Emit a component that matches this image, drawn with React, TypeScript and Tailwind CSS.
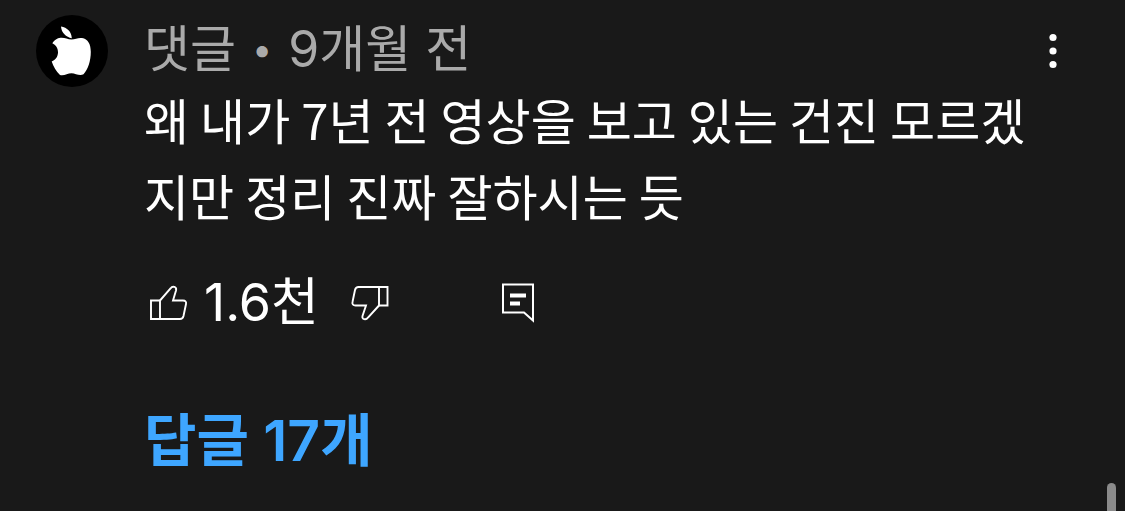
import { useState } from "react";

const comment = {
  author: "댓글",
  age: "9개월 전",
  text: "왜 내가 7년 전 영상을 보고 있는 건진 모르겠지만 정리 진짜 잘하시는 듯",
  likes: "1.6천",
  replies: 17,
};

function AppleAvatar() {
  return (
    <svg viewBox="0 0 72 72" className="size-[72px] shrink-0" aria-hidden="true">
      <circle cx="36" cy="36" r="36" fill="#000" />
      <path
        d="M25 11.5C31 12.5 35.5 16.5 35.8 23.3C30 22 25.5 18 25 11.5Z"
        fill="#fff"
      />
      <path
        d="M16.3 28.2C18.5 25 21 23.2 24.5 22.8C28.5 22.4 31.5 24.4 35.5 24.4C39.5 24.4 42 22.4 46 23C52 24 54.8 29 54.8 37C54.8 46 52 54.5 47.5 59.3C43.5 61.5 39.5 58.2 35.5 58.2C31.5 58.2 28 61.2 24 60C20 56 17.5 51.5 15.7 46.4C19.5 45 22 41.5 22 37.2C22 33 19.8 29.8 16.3 28.2Z"
        fill="#fff"
      />
    </svg>
  );
}

function ThumbUpIcon() {
  return (
    <svg viewBox="0 0 38 36" className="h-9 w-[38px]" fill="none" stroke="currentColor" strokeWidth="1.9" aria-hidden="true">
      <path d="M1 15.5H10V34H1Z" />
      <path d="M10 15.5L20.5 3.5C22.5 .5 27 1.5 26 5.5L23 15.5H33C35.5 15.5 36.5 17 36 19L33.5 31C33 33 32 34 30 34H10" />
    </svg>
  );
}

function ThumbDownIcon() {
  return (
    <svg viewBox="0 0 38 36" className="h-9 w-[38px]" fill="none" stroke="currentColor" strokeWidth="1.9" aria-hidden="true">
      <path d="M28 2H36.5V20.5H28Z" />
      <path d="M28 20.5L17 32.5C15 35.5 10.5 34.5 11.5 31L15 20.5H4.5C2 20.5 1 19 1.5 17L4 5C4.5 3 5.5 2 7.5 2H28" />
    </svg>
  );
}

function CommentIcon() {
  return (
    <svg viewBox="0 0 34 40" className="h-10 w-[34px]" fill="none" stroke="currentColor" aria-hidden="true">
      <path d="M2 1.5H32V37.5L23 29.5H2Z" strokeWidth="2" />
      <path d="M9 12.5H25M9 20.5H19" strokeWidth="4" />
    </svg>
  );
}

export default function App() {
  const [vote, setVote] = useState<"up" | "down" | null>(null);

  return (
    <main className="relative min-h-screen overflow-hidden bg-[#191919] font-['Inter','Noto_Sans_CJK_KR',sans-serif] text-white">
      <article className="flex items-start gap-9 pt-[15px] pr-[60px] pl-9">
        <AppleAvatar />

        <div className="min-w-0 flex-1">
          <header className="flex h-[66px] items-start justify-between">
            <p className="flex items-center gap-4 text-[50px] leading-[68px] text-[#aaaaaa]">
              <span>{comment.author}</span>
              <span className="text-4xl">•</span>
              <span>{comment.age}</span>
            </p>
            <button type="button" aria-label="메뉴" className="flex h-[72px] w-6 items-center justify-center">
              <svg viewBox="0 0 8 36" className="h-9 w-2" fill="currentColor" aria-hidden="true">
                <circle cx="4" cy="4.5" r="3.6" />
                <circle cx="4" cy="18" r="3.6" />
                <circle cx="4" cy="31.5" r="3.6" />
              </svg>
            </button>
          </header>

          <p className="pr-4 font-['Noto_Sans_CJK_KR',sans-serif] text-[49px] leading-[76px] break-all">{comment.text}</p>

          <div className="mt-[34px] flex items-center pl-[6px]">
            <button
              type="button"
              aria-label="좋아요"
              aria-pressed={vote === "up"}
              onClick={() => setVote(vote === "up" ? null : "up")}
              className="flex items-center gap-4"
            >
              <ThumbUpIcon />
              <span className="text-[52px] leading-[72px]">{comment.likes}</span>
            </button>
            <button
              type="button"
              aria-label="싫어요"
              aria-pressed={vote === "down"}
              onClick={() => setVote(vote === "down" ? null : "down")}
              className="ml-8"
            >
              <ThumbDownIcon />
            </button>
            <button type="button" aria-label="답글 달기" className="ml-28">
              <CommentIcon />
            </button>
          </div>

          <button type="button" className="mt-16 block text-[57px] leading-[76px] font-semibold text-[#3ea6ff]">
            답글 {comment.replies}개
          </button>
        </div>
      </article>

      {/* scroll thumb */}
      <div className="absolute right-[9px] bottom-0 h-7 w-[9px] rounded-t-full bg-[#8b8b8b]" />
    </main>
  );
}
